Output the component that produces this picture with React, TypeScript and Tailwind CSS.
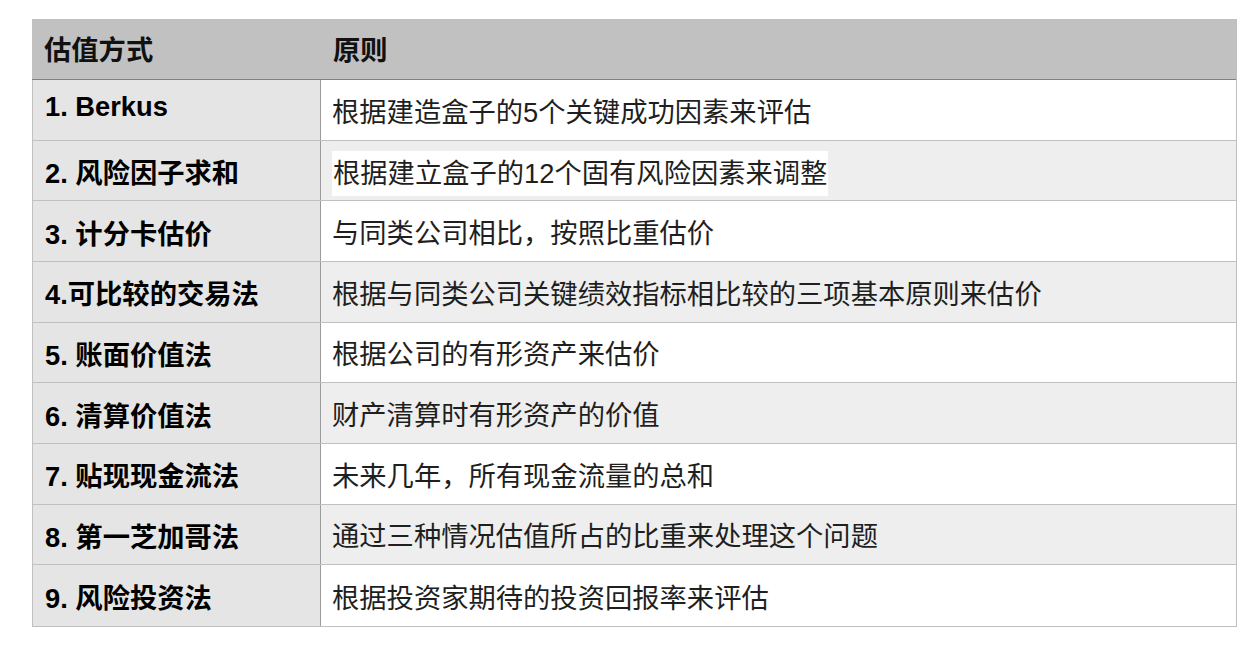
const rows: [string, string][] = [
  ["1. Berkus", "根据建造盒子的5个关键成功因素来评估"],
  ["2. 风险因子求和", "根据建立盒子的12个固有风险因素来调整"],
  ["3. 计分卡估价", "与同类公司相比，按照比重估价"],
  ["4.可比较的交易法", "根据与同类公司关键绩效指标相比较的三项基本原则来估价"],
  ["5. 账面价值法", "根据公司的有形资产来估价"],
  ["6. 清算价值法", "财产清算时有形资产的价值"],
  ["7. 贴现现金流法", "未来几年，所有现金流量的总和"],
  ["8. 第一芝加哥法", "通过三种情况估值所占的比重来处理这个问题"],
  ["9. 风险投资法", "根据投资家期待的投资回报率来评估"],
]

export default function App() {
  return (
    <div
      className="w-[1260px] h-[648px] bg-white pt-[19px] pl-[32px]"
      style={{ fontFamily: '"Liberation Sans", "Noto Sans CJK SC", sans-serif' }}
    >
      <div className="w-[1205px] border-r border-b border-[#c0c0c0]">
        {/* Header */}
        <div className="flex h-[61px] bg-[#c0c1c0] border-b border-[#7f7f7f] text-[27.3px] font-bold text-[#111]">
          <div className="w-[289px] flex items-center pl-[12px] pt-[4px]">估值方式</div>
          <div className="flex-1 flex items-center pl-[12px] pt-[4px]">原则</div>
        </div>

        {rows.map(([method, rule], i) => (
          <div
            key={method}
            className={`flex h-[60.67px] text-[27.3px] ${i < rows.length - 1 ? "border-b border-[#c0c0c0]" : ""}`}
          >
            <div
              className={`w-[289px] flex items-center pl-[12px] bg-[#e4e5e4] border-l border-[#c0c0c0] border-r border-r-[#9a9a9a] font-bold text-black ${
                i === 0 ? "pb-[4px]" : "pt-[8px]"
              }`}
            >
              {method}
            </div>
            <div
              className={`flex-1 flex items-center pl-[11px] pt-[7px] text-[#1f1f1f] ${
                i % 2 === 1 ? "bg-[#eeeeee]" : "bg-white"
              }`}
            >
              {i === 1 ? (
                <span className="bg-white leading-[45px] pl-[1px] pr-[1px]">{rule}</span>
              ) : (
                <span>{rule}</span>
              )}
            </div>
          </div>
        ))}
      </div>
    </div>
  )
}
